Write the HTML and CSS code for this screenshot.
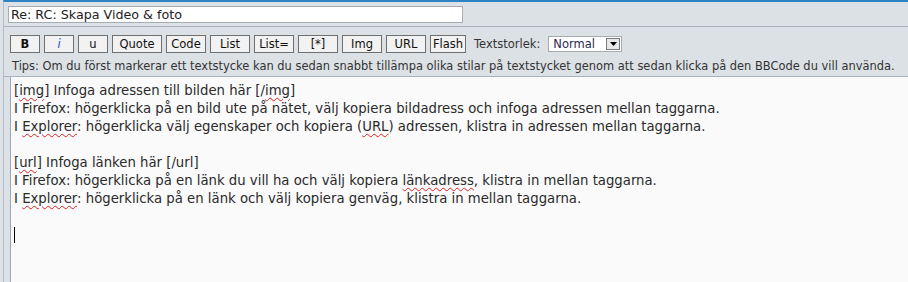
FILE: index.html
```html
<!DOCTYPE html>
<html lang="sv">
<head>
<meta charset="utf-8">
<title>Skapa Video &amp; foto</title>
<link rel="stylesheet" href="styles.css">
</head>
<body>
<div class="frame">
  <div class="subject-row">
    <div class="subject">Re: RC: Skapa Video &amp; foto</div>
  </div>
  <div class="tools">
    <div class="toolbar">
      <span class="btn w30 bold">B</span>
      <span class="btn w30 ital">i</span>
      <span class="btn w30">u</span>
      <span class="btn w50">Quote</span>
      <span class="btn">Code</span>
      <span class="btn">List</span>
      <span class="btn">List=</span>
      <span class="btn">[*]</span>
      <span class="btn">Img</span>
      <span class="btn">URL</span>
      <span class="btn w35">Flash</span>
      <span class="label">Textstorlek:</span>
      <span class="select"><span class="sel-text">Normal</span><span class="sel-arrow"><svg width="7" height="4" viewBox="0 0 7 4"><path d="M0 0h7L3.5 4z" fill="#000"/></svg></span></span>
    </div>
    <div class="tips">Tips: Om du först markerar ett textstycke kan du sedan snabbt tillämpa olika stilar på textstycket genom att sedan klicka på den BBCode du vill använda.</div>
  </div>
  <div class="editor">
    <div class="line">[<span class="sp">img</span>] Infoga adressen till bilden här [/<span class="sp">img</span>]</div>
    <div class="line">I Firefox: högerklicka på en bild ute på nätet, välj kopiera bildadress och infoga adressen mellan taggarna.</div>
    <div class="line">I <span class="sp">Explorer</span>: högerklicka välj egenskaper och kopiera (<span class="sp">URL</span>) adressen, klistra in adressen mellan taggarna.</div>
    <div class="line">&nbsp;</div>
    <div class="line">[<span class="sp">url</span>] Infoga länken här [/url]</div>
    <div class="line">I Firefox: högerklicka på en länk du vill ha och välj kopiera <span class="sp">länkadress</span>, klistra in mellan taggarna.</div>
    <div class="line">I <span class="sp">Explorer</span>: högerklicka på en länk och välj kopiera genväg, klistra in mellan taggarna.</div>
    <div class="line">&nbsp;</div>
    <div class="line"><span class="caret"></span></div>
  </div>
</div>
</body>
</html>
```

FILE: styles.css
```css
html, body {
  margin: 0;
  padding: 0;
  background: #dce1e5;
}
body {
  font-family: "DejaVu Sans", Verdana, sans-serif;
  color: #222;
  width: 908px;
  height: 282px;
  overflow: hidden;
}
.frame {
  border-top: 2px solid #2c83c6;
  height: 280px;
  margin-left: 3px;
  border-left: 1px solid #b4bec7;
  display: flex;
  flex-direction: column;
}
.subject-row {
  height: 25px;
  border-bottom: 1px solid #a9b3bc;
  padding: 4px 0 0 4px;
  box-sizing: border-box;
}
.subject {
  width: 451px;
  height: 15px;
  background: #fff;
  border: 1px solid #a5acb2;
  font-size: 12.7px;
  line-height: 15px;
  padding-left: 2px;
  color: #222;
}
.tools {
  padding: 8px 0 0 6px;
  height: 50px;
  box-sizing: border-box;
  border-bottom: 1px solid #a9b3bc;
}
.toolbar {
  display: flex;
  align-items: center;
  gap: 4px;
  height: 18px;
}
.btn {
  box-sizing: border-box;
  height: 18px;
  width: 40px;
  border: 1px solid #6f6f6f;
  background: #f2f2f2;
  font-size: 11.5px;
  line-height: 16px;
  text-align: center;
  color: #111;
}
.btn.w30 { width: 30px; }
.btn.w35 { width: 36px; }
.btn.w50 { width: 50px; }
.bold { font-weight: bold; }
.ital { font-style: italic; color: #1450c8; }
.label {
  font-size: 11.5px;
  color: #333;
  margin-left: 4px;
  margin-right: 4px;
}
.select {
  box-sizing: border-box;
  width: 74px;
  height: 16px;
  background: #fff;
  border: 1px solid #a5acb2;
  display: flex;
  align-items: center;
  justify-content: space-between;
  padding-left: 4px;
  padding-right: 1px;
  font-size: 11.5px;
  color: #2a2850;
}
.sel-arrow {
  box-sizing: border-box;
  width: 14px;
  height: 12px;
  background: #e8e8e8;
  border: 1px solid #7a7a7a;
  display: flex;
  align-items: center;
  justify-content: center;
}
.tips {
  font-size: 11.45px;
  color: #333;
  margin-top: 6px;
  margin-left: 2px;
  white-space: nowrap;
}
.editor {
  flex: 1;
  margin-left: 6px;
  background: #fafafa;
  border-left: 1px solid #9aa8b6;
  padding: 5px 0 0 3px;
  font-size: 13.25px;
  line-height: 18px;
  color: #2a2a2a;
  white-space: nowrap;
}
.sp {
  text-decoration: underline wavy #e02020;
  text-decoration-thickness: 1px;
  text-underline-offset: 2px;
}
.caret {
  display: inline-block;
  width: 1px;
  height: 16px;
  background: #000;
  vertical-align: middle;
}
```
